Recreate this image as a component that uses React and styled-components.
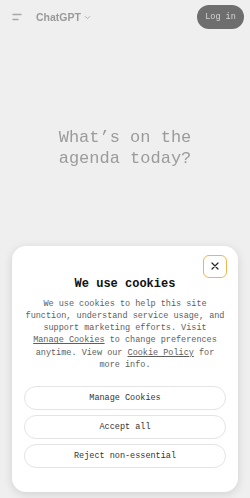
import React from 'react';
import styled, { createGlobalStyle } from 'styled-components';

const Global = createGlobalStyle`
  html, body { margin: 0; padding: 0; background: #efefef; }
  * { box-sizing: border-box; }
`;

const mono = `"Liberation Mono", "DejaVu Sans Mono", monospace`;

const Page = styled.div`
  width: 250px;
  height: 498px;
  position: relative;
  overflow: hidden;
  background: #efefef;
`;

const Behind = styled.div`
  filter: blur(0.7px);
  display: flex;
  flex-direction: column;
`;

const Header = styled.div`
  height: 34px;
  display: flex;
  align-items: center;
  padding: 0 6px 0 12px;
`;

const MenuIcon = styled.svg`
  width: 10px;
  height: 8px;
  margin-right: 14px;
`;

const Brand = styled.div`
  display: flex;
  align-items: center;
  gap: 3px;
  font-family: "Liberation Sans", Arial, sans-serif;
  font-weight: 700;
  font-size: 10.5px;
  color: #9a9a9a;
`;

const LoginButton = styled.div`
  margin-left: auto;
  height: 24px;
  width: 47px;
  border-radius: 12px;
  background: #6e6e6e;
  color: #d8d8d8;
  font-family: ${mono};
  font-size: 8.5px;
  display: flex;
  align-items: center;
  justify-content: center;
`;

const Hero = styled.div`
  padding-top: 93px;
  text-align: center;
  font-family: ${mono};
  font-size: 17px;
  line-height: 21px;
  color: #9b9b9b;
`;

const Modal = styled.div`
  position: absolute;
  left: 12px;
  right: 12px;
  bottom: 6px;
  background: #fff;
  border-radius: 14px;
  box-shadow: 0 2px 10px rgba(0, 0, 0, 0.13);
  padding: 30px 12px 24px;
  display: flex;
  flex-direction: column;
  align-items: stretch;
`;

const CloseButton = styled.button`
  position: absolute;
  top: 9px;
  right: 11px;
  width: 24px;
  height: 23px;
  border: 1.5px solid #f0b54e;
  border-radius: 6px;
  background: #fff;
  padding: 0;
  display: flex;
  align-items: center;
  justify-content: center;
`;

const Title = styled.div`
  font-family: ${mono};
  font-weight: 700;
  font-size: 12px;
  line-height: 16px;
  color: #111;
  text-align: center;
`;

const Body = styled.p`
  margin: 6px 0 0;
  font-family: ${mono};
  font-size: 8.5px;
  line-height: 12.2px;
  color: #5e5e5e;
  text-align: center;
`;

const Link = styled.span`
  text-decoration: underline;
  white-space: nowrap;
`;

const Buttons = styled.div`
  margin-top: 15px;
  display: flex;
  flex-direction: column;
  gap: 5px;
`;

const Choice = styled.button`
  height: 24px;
  border: 1px solid #e4e4e4;
  border-radius: 999px;
  background: #fff;
  font-family: ${mono};
  font-size: 8.5px;
  color: #333;
  padding: 0;
`;

export default function App() {
  return (
    <Page>
      <Global />
      <Behind>
        <Header>
          <MenuIcon viewBox="0 0 10 8">
            <path d="M1 1.5h8M1 6.5h5" stroke="#a8a8a8" strokeWidth="1.4" strokeLinecap="round" />
          </MenuIcon>
          <Brand>
            ChatGPT
            <svg width="7" height="5" viewBox="0 0 7 5">
              <path d="M1 1.2l2.5 2.5L6 1.2" fill="none" stroke="#b0b0b0" strokeWidth="1" />
            </svg>
          </Brand>
          <LoginButton>Log in</LoginButton>
        </Header>
        <Hero>
          What’s on the<br />agenda today?
        </Hero>
      </Behind>

      <Modal>
        <CloseButton aria-label="Close">
          <svg width="8" height="8" viewBox="0 0 8 8">
            <path d="M1 1l6 6M7 1L1 7" stroke="#222" strokeWidth="1.2" strokeLinecap="round" />
          </svg>
        </CloseButton>
        <Title>We use cookies</Title>
        <Body>
          We use cookies to help this site function, understand service usage, and support
          marketing efforts. Visit <Link>Manage Cookies</Link> to change preferences anytime.
          View our <Link>Cookie Policy</Link> for more info.
        </Body>
        <Buttons>
          <Choice>Manage Cookies</Choice>
          <Choice>Accept all</Choice>
          <Choice>Reject non-essential</Choice>
        </Buttons>
      </Modal>
    </Page>
  );
}
